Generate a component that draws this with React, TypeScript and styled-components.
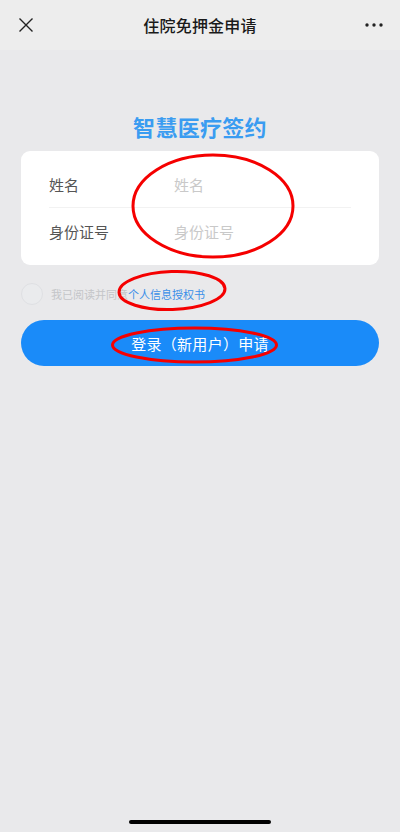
import type { FC } from 'react';
import styled, { createGlobalStyle } from 'styled-components';

const GlobalStyle = createGlobalStyle`
  html, body {
    margin: 0;
    padding: 0;
    background: #e9e9eb;
    font-family: "Noto Sans CJK SC", "Noto Sans", sans-serif;
  }
  * {
    box-sizing: border-box;
  }
`;

const Page = styled.div`
  position: relative;
  width: 400px;
  min-height: 832px;
  display: flex;
  flex-direction: column;
  background: #e9e9eb;
`;

const NavBar = styled.div`
  height: 50px;
  padding: 8px 14px;
  display: flex;
  align-items: center;
  justify-content: space-between;
  background: #ededed;
`;

const NavButton = styled.div`
  width: 24px;
  height: 24px;
  display: flex;
  align-items: center;
  justify-content: center;
`;

const NavTitle = styled.div`
  font-size: 16px;
  font-weight: 500;
  color: #1a1a1a;
  letter-spacing: 0.2px;
`;

const Content = styled.div`
  padding: 0 21px;
  display: flex;
  flex-direction: column;
`;

const Heading = styled.h1`
  margin: 61px 0 10px;
  font-size: 22px;
  line-height: 30px;
  font-weight: 700;
  color: #3a9cf1;
  text-align: center;
  letter-spacing: 0.3px;
`;

const Card = styled.div`
  background: #ffffff;
  border-radius: 9px;
  padding: 10px 28px;
`;

const FieldRow = styled.div<{ $divider?: boolean }>`
  height: 47px;
  display: flex;
  align-items: center;
  border-bottom: ${p => (p.$divider ? '1px solid #f2f2f2' : 'none')};
`;

const FieldLabel = styled.div`
  width: 125px;
  font-size: 15px;
  color: #555555;
`;

const FieldInput = styled.input`
  flex: 1;
  border: none;
  outline: none;
  padding: 0;
  font-family: inherit;
  font-size: 15px;
  color: #333333;
  background: transparent;
  &::placeholder {
    color: #c9c9c9;
  }
`;

const AgreeRow = styled.div`
  margin-top: 18px;
  display: flex;
  align-items: center;
  gap: 8px;
`;

const CheckCircle = styled.div`
  width: 22px;
  height: 22px;
  border-radius: 50%;
  border: 1px solid #dfe0e3;
  background: #eaebed;
`;

const AgreeText = styled.div`
  font-size: 11px;
  color: #c4c5c8;
`;

const AgreeLink = styled.span`
  color: #3a8fe8;
`;

const SubmitButton = styled.button`
  margin-top: 15px;
  height: 46px;
  border: none;
  border-radius: 23px;
  background: #1a8bf9;
  color: #ffffff;
  font-family: inherit;
  font-size: 15px;
  letter-spacing: 0.3px;
`;

const HomeIndicator = styled.div`
  margin: auto auto 8px;
  width: 142px;
  height: 4px;
  border-radius: 2px;
  background: #000000;
`;

const Marks = styled.svg`
  position: absolute;
  left: 0;
  top: 0;
  pointer-events: none;
`;

export const App: FC = () => {
  return (
    <Page>
      <GlobalStyle />
      <NavBar>
        <NavButton>
          <svg width="16" height="16" viewBox="0 0 16 16">
            <path d="M1.5 1.5 L14.5 14.5 M14.5 1.5 L1.5 14.5" stroke="#222" strokeWidth="1.4" />
          </svg>
        </NavButton>
        <NavTitle>住院免押金申请</NavTitle>
        <NavButton>
          <svg width="20" height="6" viewBox="0 0 20 6">
            <circle cx="3" cy="3" r="1.7" fill="#222" />
            <circle cx="10" cy="3" r="1.7" fill="#222" />
            <circle cx="17" cy="3" r="1.7" fill="#222" />
          </svg>
        </NavButton>
      </NavBar>

      <Content>
        <Heading>智慧医疗签约</Heading>
        <Card>
          <FieldRow $divider>
            <FieldLabel>姓名</FieldLabel>
            <FieldInput placeholder="姓名" />
          </FieldRow>
          <FieldRow>
            <FieldLabel>身份证号</FieldLabel>
            <FieldInput placeholder="身份证号" />
          </FieldRow>
        </Card>

        <AgreeRow>
          <CheckCircle />
          <AgreeText>
            我已阅读并同意<AgreeLink>个人信息授权书</AgreeLink>
          </AgreeText>
        </AgreeRow>

        <SubmitButton>登录（新用户）申请</SubmitButton>
      </Content>

      <HomeIndicator />

      <Marks width="400" height="832" viewBox="0 0 400 832">
        <g fill="none" stroke="#f50000" strokeWidth="3">
          <ellipse cx="213" cy="206" rx="80" ry="51" />
          <ellipse cx="172" cy="290.5" rx="53" ry="19" transform="rotate(-2 172 290.5)" />
          <ellipse cx="194.5" cy="345" rx="82" ry="17" />
        </g>
      </Marks>
    </Page>
  );
};

export default App;
